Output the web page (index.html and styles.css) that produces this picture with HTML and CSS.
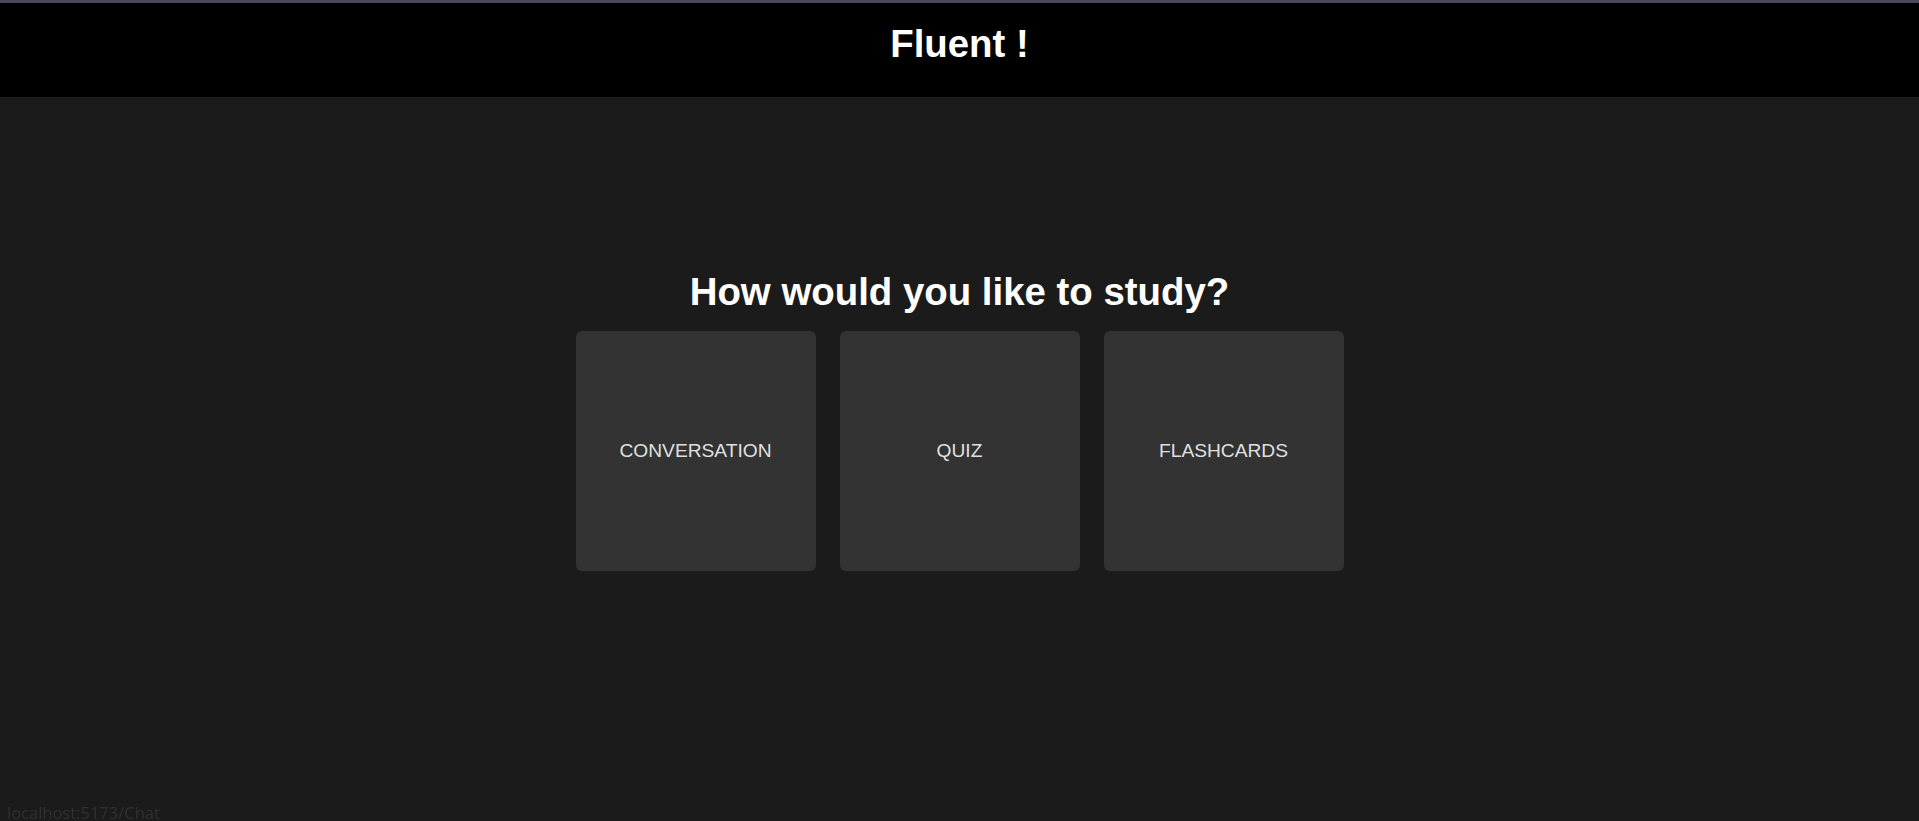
FILE: index.html
```html
<!DOCTYPE html>
<html lang="en">
<head>
<meta charset="utf-8">
<title>Fluent !</title>
<link rel="stylesheet" href="styles.css">
</head>
<body>
  <header class="topbar">
    <h1 class="brand">Fluent !</h1>
  </header>
  <main class="chooser">
    <h2 class="chooser-title">How would you like to study?</h2>
    <div class="modes">
      <a class="mode-card" href="#">CONVERSATION</a>
      <a class="mode-card" href="#">QUIZ</a>
      <a class="mode-card" href="#">FLASHCARDS</a>
    </div>
  </main>
  <div class="status-link">localhost:5173/Chat</div>
</body>
</html>
```
FILE: styles.css
```css
* { box-sizing: border-box; }

html, body {
  margin: 0;
  padding: 0;
  height: 100%;
}

body {
  background: #1b1b1b;
  font-family: "Liberation Sans", Arial, sans-serif;
  color: #ffffff;
  overflow: hidden;
}

.topbar {
  height: 97px;
  background: #000000;
  border-top: 3px solid #4a4760;
  padding-top: 19px;
  display: flex;
  justify-content: center;
  align-items: flex-start;
}

.brand {
  margin: 0;
  font-size: 38.4px;
  font-weight: 700;
  line-height: normal;
  color: #ffffff;
}

.chooser {
  padding-top: 173px;
  display: flex;
  flex-direction: column;
  align-items: center;
}

.chooser-title {
  margin: 0 0 17px;
  font-size: 38.4px;
  font-weight: 700;
  line-height: 44px;
  color: #ffffff;
}

.modes {
  display: flex;
  gap: 24px;
}

.mode-card {
  width: 240px;
  height: 240px;
  background: #333333;
  border-radius: 6px;
  display: flex;
  align-items: center;
  justify-content: center;
  color: rgba(255, 255, 255, 0.87);
  text-decoration: none;
  font-size: 19.2px;
}

.status-link {
  position: fixed;
  left: 7px;
  bottom: 0;
  line-height: 1;
  font-family: "Open Sans", "Noto Sans", sans-serif;
  font-size: 16.5px;
  color: #313131;
}
```
